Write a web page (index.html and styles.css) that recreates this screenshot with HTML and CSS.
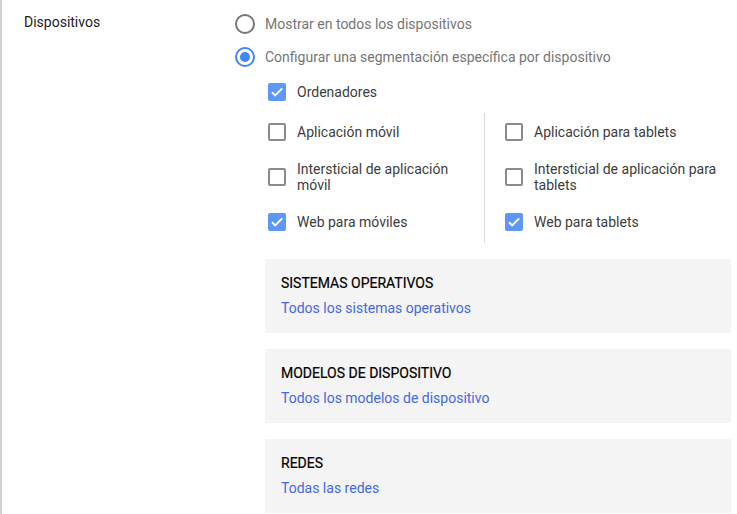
FILE: index.html
```html
<!DOCTYPE html>
<html lang="es">
<head>
<meta charset="utf-8">
<link rel="stylesheet" href="styles.css">
</head>
<body>
<div class="page">
  <div class="label-col">Dispositivos</div>
  <div class="content">
    <div class="radio-row">
      <span class="radio"></span>
      <span class="radio-text">Mostrar en todos los dispositivos</span>
    </div>
    <div class="radio-row">
      <span class="radio checked"></span>
      <span class="radio-text">Configurar una segmentación específica por dispositivo</span>
    </div>
    <div class="check-row single">
      <span class="box"><span class="cb on"><svg viewBox="0 0 18 18"><path d="M4 9.2l3.2 3.2L14.2 5.4" fill="none" stroke="#fff" stroke-width="2"/></svg></span></span>
      <span class="check-text">Ordenadores</span>
    </div>
    <div class="grid">
      <div class="col left">
        <div class="check-row">
          <span class="box"><span class="cb"></span></span>
          <span class="check-text">Aplicación móvil</span>
        </div>
        <div class="check-row">
          <span class="box"><span class="cb"></span></span>
          <span class="check-text">Intersticial de aplicación móvil</span>
        </div>
        <div class="check-row">
          <span class="box"><span class="cb on"><svg viewBox="0 0 18 18"><path d="M4 9.2l3.2 3.2L14.2 5.4" fill="none" stroke="#fff" stroke-width="2"/></svg></span></span>
          <span class="check-text">Web para móviles</span>
        </div>
      </div>
      <div class="col right">
        <div class="check-row">
          <span class="box"><span class="cb"></span></span>
          <span class="check-text">Aplicación para tablets</span>
        </div>
        <div class="check-row">
          <span class="box"><span class="cb"></span></span>
          <span class="check-text">Intersticial de aplicación para tablets</span>
        </div>
        <div class="check-row">
          <span class="box"><span class="cb on"><svg viewBox="0 0 18 18"><path d="M4 9.2l3.2 3.2L14.2 5.4" fill="none" stroke="#fff" stroke-width="2"/></svg></span></span>
          <span class="check-text">Web para tablets</span>
        </div>
      </div>
    </div>
    <div class="panel">
      <div class="panel-title">SISTEMAS OPERATIVOS</div>
      <a class="panel-link">Todos los sistemas operativos</a>
    </div>
    <div class="panel">
      <div class="panel-title">MODELOS DE DISPOSITIVO</div>
      <a class="panel-link">Todos los modelos de dispositivo</a>
    </div>
    <div class="panel">
      <div class="panel-title">REDES</div>
      <a class="panel-link">Todas las redes</a>
    </div>
  </div>
</div>
</body>
</html>
```
FILE: styles.css
```css
html, body {
  margin: 0;
  padding: 0;
  background: #fff;
}
body {
  font-family: Roboto, "Liberation Sans", Arial, sans-serif;
  font-size: 14px;
  color: #212121;
  overflow: hidden;
}
.page {
  display: flex;
  border-left: 2px solid #d0d0d0;
  min-height: 514px;
  box-sizing: border-box;
}
.label-col {
  width: 211px;
  padding-left: 22px;
  padding-top: 14px;
  line-height: 16px;
  color: #212121;
  flex: none;
}
.content {
  flex: none;
  width: 496px;
  padding-top: 14px;
}
.radio-row {
  display: flex;
  align-items: center;
  height: 20px;
  margin-bottom: 13px;
}
.radio {
  width: 20px;
  height: 20px;
  box-sizing: border-box;
  border: 2px solid #757575;
  border-radius: 50%;
  flex: none;
  position: relative;
}
.radio.checked {
  border-color: #4285f4;
}
.radio.checked::after {
  content: "";
  position: absolute;
  left: 3px;
  top: 3px;
  width: 10px;
  height: 10px;
  border-radius: 50%;
  background: #4285f4;
}
.radio-text {
  margin-left: 10px;
  color: #757575;
  line-height: 16px;
}
.check-row {
  display: flex;
  align-items: center;
  min-height: 24px;
}
.check-row.single {
  margin-left: 30px;
  margin-top: 3px;
}
.box {
  width: 24px;
  height: 24px;
  display: flex;
  align-items: center;
  justify-content: center;
  flex: none;
}
.cb {
  width: 18px;
  height: 18px;
  box-sizing: border-box;
  border: 2px solid #8a8a8a;
  border-radius: 2px;
  display: block;
}
.cb.on {
  border: none;
  background: #5e97f6;
}
.cb svg {
  width: 18px;
  height: 18px;
  display: block;
}
.check-text {
  margin-left: 8px;
  line-height: 16px;
  color: #3c3c3c;
}
.grid {
  display: flex;
  margin-left: 30px;
  margin-top: 9px;
}
.col {
  display: flex;
  flex-direction: column;
  gap: 17px;
  padding: 7px 0 9px;
}
.col.left {
  width: 219px;
  box-sizing: border-box;
  padding-right: 30px;
}
.col.right {
  border-left: 1px solid #dadada;
  padding-left: 17px;
  width: 246px;
  box-sizing: border-box;
}
.panel {
  margin-left: 30px;
  margin-top: 16px;
  background: #f4f4f4;
  height: 74px;
  box-sizing: border-box;
  padding: 16px 16px 0;
}
.panel-title {
  font-size: 14px;
  font-weight: 400;
  color: #000;
  line-height: 16px;
  -webkit-text-stroke: 0.2px #000;
}
.panel-link {
  display: block;
  margin-top: 9px;
  color: #4468dd;
  line-height: 16px;
  cursor: pointer;
}
```
